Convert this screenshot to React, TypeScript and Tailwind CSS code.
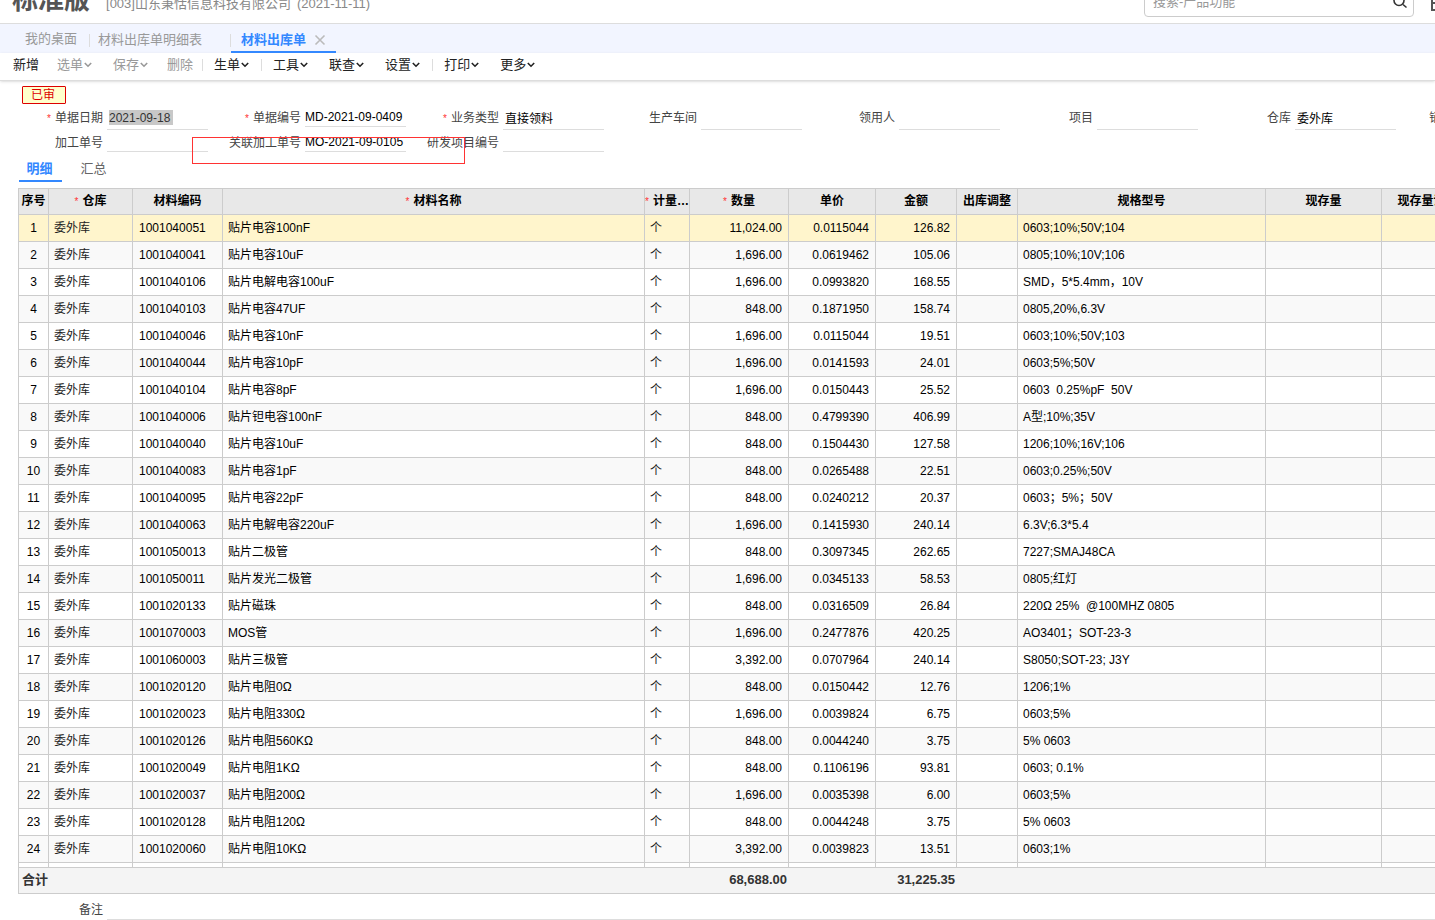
import { useState } from 'react';
import type { ReactNode } from 'react';

type Row = [string, string, string, string, string, string];

const rows: Row[] = [
  ['1001040051', '贴片电容100nF', '11,024.00', '0.0115044', '126.82', '0603;10%;50V;104'],
  ['1001040041', '贴片电容10uF', '1,696.00', '0.0619462', '105.06', '0805;10%;10V;106'],
  ['1001040106', '贴片电解电容100uF', '1,696.00', '0.0993820', '168.55', 'SMD，5*5.4mm，10V'],
  ['1001040103', '贴片电容47UF', '848.00', '0.1871950', '158.74', '0805,20%,6.3V'],
  ['1001040046', '贴片电容10nF', '1,696.00', '0.0115044', '19.51', '0603;10%;50V;103'],
  ['1001040044', '贴片电容10pF', '1,696.00', '0.0141593', '24.01', '0603;5%;50V'],
  ['1001040104', '贴片电容8pF', '1,696.00', '0.0150443', '25.52', '0603  0.25%pF  50V'],
  ['1001040006', '贴片钽电容100nF', '848.00', '0.4799390', '406.99', 'A型;10%;35V'],
  ['1001040040', '贴片电容10uF', '848.00', '0.1504430', '127.58', '1206;10%;16V;106'],
  ['1001040083', '贴片电容1pF', '848.00', '0.0265488', '22.51', '0603;0.25%;50V'],
  ['1001040095', '贴片电容22pF', '848.00', '0.0240212', '20.37', '0603；5%；50V'],
  ['1001040063', '贴片电解电容220uF', '1,696.00', '0.1415930', '240.14', '6.3V;6.3*5.4'],
  ['1001050013', '贴片二极管', '848.00', '0.3097345', '262.65', '7227;SMAJ48CA'],
  ['1001050011', '贴片发光二极管', '1,696.00', '0.0345133', '58.53', '0805;红灯'],
  ['1001020133', '贴片磁珠', '848.00', '0.0316509', '26.84', '220Ω 25%  @100MHZ 0805'],
  ['1001070003', 'MOS管', '1,696.00', '0.2477876', '420.25', 'AO3401；SOT-23-3'],
  ['1001060003', '贴片三极管', '3,392.00', '0.0707964', '240.14', 'S8050;SOT-23; J3Y'],
  ['1001020120', '贴片电阻0Ω', '848.00', '0.0150442', '12.76', '1206;1%'],
  ['1001020023', '贴片电阻330Ω', '1,696.00', '0.0039824', '6.75', '0603;5%'],
  ['1001020126', '贴片电阻560KΩ', '848.00', '0.0044240', '3.75', '5% 0603'],
  ['1001020049', '贴片电阻1KΩ', '848.00', '0.1106196', '93.81', '0603; 0.1%'],
  ['1001020037', '贴片电阻200Ω', '1,696.00', '0.0035398', '6.00', '0603;5%'],
  ['1001020128', '贴片电阻120Ω', '848.00', '0.0044248', '3.75', '5% 0603'],
  ['1001020060', '贴片电阻10KΩ', '3,392.00', '0.0039823', '13.51', '0603;1%'],
];

const columns = [
  { title: '序号', width: 'w-[30px]' },
  { title: '仓库', width: 'w-[84px]', required: true },
  { title: '材料编码', width: 'w-[90px]' },
  { title: '材料名称', width: '', required: true },
  { title: '计量单位', width: 'w-[45px]', required: true },
  { title: '数量', width: 'w-[99px]', required: true },
  { title: '单价', width: 'w-[87px]' },
  { title: '金额', width: 'w-[81px]' },
  { title: '出库调整', width: 'w-[61px]' },
  { title: '规格型号', width: 'w-[248px]' },
  { title: '现存量', width: 'w-[116px]' },
  { title: '现存量说明', width: 'w-[92px]' },
];

const Chevron = () => (
  <svg className="h-2 w-2.5" viewBox="0 0 10 8" fill="none" stroke="currentColor" strokeWidth="1.6">
    <path d="M1.800 2l3.200 3.200L8.200 2" />
  </svg>
);

const ToolButton = ({ children, disabled }: { children: ReactNode; disabled?: boolean }) => (
  <button type="button" disabled={disabled} className="px-2 text-[#222] disabled:text-[#999]">
    {children}
  </button>
);

const MenuButton = ({ children, disabled }: { children: ReactNode; disabled?: boolean }) => (
  <button
    type="button"
    disabled={disabled}
    className="flex items-center px-[10px] text-[#222] disabled:text-[#999]"
  >
    {children}
    <Chevron />
  </button>
);

const Divider = () => <span className="mx-px h-3 w-px bg-[#ddd]" />;

type FieldProps = {
  id: string;
  label: string;
  value?: string;
  required?: boolean;
  picker?: boolean;
  selected?: boolean;
};

const Field = ({ id, label, value = '', required, picker, selected }: FieldProps) => (
  <div className="flex w-[198px] shrink-0 items-start justify-end gap-1">
    <label htmlFor={id} className="whitespace-nowrap leading-6 text-[#444]">
      {required && <span className="mr-1 text-[10px] leading-none text-[#f33]">*</span>}
      {label}
    </label>
    {selected ? (
      <div className="h-6 w-[101px] border-b border-[#ddd] pl-0.5">
        <input
          id={id}
          defaultValue={value}
          className="mt-1 block h-[15px] w-16 bg-[#c8c8c8] text-[#333] outline-none"
        />
      </div>
    ) : (
      <input
        id={id}
        defaultValue={value}
        className={`w-[101px] border-b border-[#ddd] bg-transparent text-black outline-none ${
          picker ? 'h-6 pl-0.5' : 'h-[21px] pt-0.5'
        }`}
      />
    )}
  </div>
);

const App = () => {
  const [current, setCurrent] = useState(0);

  return (
    <div className="min-h-screen overflow-hidden bg-white font-['Liberation_Sans','Noto_Sans_CJK_SC',sans-serif] text-xs text-black">
      <header className="flex h-6 items-end border-b border-[#ddd] pl-3 text-[13px] text-[#888]">
        <h1 className="mb-[10px] text-[26px] font-bold leading-none text-[#555]">标准版</h1>
        <span className="mb-[9px] ml-4 leading-5">[003]山东秉恬信息科技有限公司</span>
        <span className="mb-[9px] ml-[6px] leading-5">(2021-11-11)</span>
        <form className="relative mb-[6px] ml-auto mr-[17px] w-[270px] shrink-0">
          <input
            type="text"
            aria-label="搜索"
            placeholder="搜索-产品功能"
            className="block h-8 w-full rounded-sm border border-[#ccc] pl-2 pr-8 outline-none placeholder:text-[#999]"
          />
          <svg
            className="absolute bottom-2 right-[6px] h-4 w-4 text-[#333]"
            viewBox="0 0 16 16"
            fill="none"
            stroke="currentColor"
            strokeWidth="1.6"
          >
            <circle cx="7" cy="7.500" r="5" />
            <path d="M11 11.500l3.500 3" />
          </svg>
        </form>
        <svg className="mb-3 -mr-3 h-4 w-4 shrink-0" viewBox="0 0 16 16" fill="none" stroke="#555" strokeWidth="2">
          <path d="M1 1h14v14H1zM1 8h14" />
        </svg>
      </header>

      <nav className="flex h-[29px] items-stretch bg-[#f2f5ff] text-[13px] text-[#999]">
        <a href="#desktop" className="flex items-center pl-[25px] pt-px">
          我的桌面
        </a>
        <span className="ml-3 mt-[10px] h-[13px] w-px bg-[#ddd]" />
        <a href="#detail" className="flex items-center pl-2 pt-[3px]">
          材料出库单明细表
        </a>
        <span className="ml-7 mt-[10px] h-[13px] w-px bg-[#ddd]" />
        <div className="flex items-center gap-2 border-b-2 border-[#38f] pl-[10px] pr-[10px] pt-1">
          <a href="#issue" className="font-bold text-[#38f]">
            材料出库单
          </a>
          <button type="button" aria-label="关闭" className="text-[#bbb]">
            <svg className="h-3 w-3" viewBox="0 0 12 12" fill="none" stroke="currentColor" strokeWidth="1.6">
              <path d="M1.500 1.500l9 9M10.500 1.500l-9 9" />
            </svg>
          </button>
        </div>
      </nav>

      <div className="flex h-7 items-center border-b border-[#ddd] pb-[3px] pl-[5px] text-[13px] shadow-sm">
        <ToolButton>新增</ToolButton>
        <MenuButton disabled>选单</MenuButton>
        <MenuButton disabled>保存</MenuButton>
        <ToolButton disabled>删除</ToolButton>
        <Divider />
        <MenuButton>生单</MenuButton>
        <Divider />
        <MenuButton>工具</MenuButton>
        <MenuButton>联查</MenuButton>
        <MenuButton>设置</MenuButton>
        <Divider />
        <MenuButton>打印</MenuButton>
        <MenuButton>更多</MenuButton>
      </div>

      <main className="relative pl-[18px] pt-[5px]">
        <div className="ml-1 h-[18px] w-11 rounded-[1px] border border-[#d00] bg-[#ffffcc] pl-2 leading-4 text-[#d00]">
          已审
        </div>

        <section className="-ml-2 mt-0.5">
          <div className="flex h-6">
            <Field id="date" label="单据日期" value="2021-09-18" required picker selected />
            <Field id="code" label="单据编号" value="MD-2021-09-0409" required />
            <Field id="biz" label="业务类型" value="直接领料" required picker />
            <Field id="workshop" label="生产车间" picker />
            <Field id="receiver" label="领用人" picker />
            <Field id="project" label="项目" picker />
            <Field id="store" label="仓库" value="委外库" picker />
            <Field id="order" label="销售订单号" picker />
          </div>
          <div className="mt-px flex h-6">
            <Field id="job" label="加工单号" />
            <Field id="linked" label="关联加工单号" value="MO-2021-09-0105" />
            <Field id="rd" label="研发项目编号" />
          </div>
        </section>
        <div className="pointer-events-none absolute left-48 top-14 h-[27px] w-[273px] border border-[#f33]" />

        <div className="ml-px flex text-[13px]">
          <button
            type="button"
            className="h-[27px] w-[43px] border-b-2 border-[#38f] pr-0.5 pt-0.5 font-bold text-[#38f]"
          >
            明细
          </button>
          <button type="button" className="ml-[10px] h-[27px] w-[43px] text-[#666]">
            汇总
          </button>
        </div>

        <table className="mt-[6px] w-full min-w-[1456px] table-fixed border-separate border-spacing-0 border-l border-t border-[#ccc]">
          <colgroup>
            {columns.map((col) => (
              <col key={col.title} className={col.width} />
            ))}
          </colgroup>
          <thead>
            <tr className="bg-[#e8e8e8]">
              {columns.map((col) => (
                <th
                  key={col.title}
                  className="h-[26px] truncate border-b border-r border-[#ccc] p-0 pb-0.5 leading-4"
                >
                  {col.required && (
                    <span className="mr-1 text-[10px] font-normal leading-none text-[#f33]">*</span>
                  )}
                  {col.title}
                </th>
              ))}
            </tr>
          </thead>
          <tbody className="[&_td]:whitespace-pre [&_td]:border-b [&_td]:border-r [&_td]:border-[#ccc] [&_td]:py-0 [&_td]:leading-4">
            {rows.map(([code, name, qty, price, amount, spec], i) => (
              <tr
                key={code}
                onClick={() => setCurrent(i)}
                className={i === current ? 'bg-[#fff5cc]' : i % 2 ? 'bg-[#f9f9f9]' : 'bg-white'}
              >
                <td className="h-[27px] text-center">{i + 1}</td>
                <td className="px-[5px] text-[#222]">委外库</td>
                <td className="px-[6px]">{code}</td>
                <td className="px-[5px]">{name}</td>
                <td className="px-[5px] text-[#222]">个</td>
                <td className="px-[6px] text-right">{qty}</td>
                <td className="px-[6px] text-right">{price}</td>
                <td className="px-[6px] text-right">{amount}</td>
                <td />
                <td className="px-[5px]">{spec}</td>
                <td />
                <td />
              </tr>
            ))}
            <tr>
              {columns.map((col) => (
                <td key={col.title} className="h-[5px]" />
              ))}
            </tr>
          </tbody>
          <tfoot>
            <tr className="bg-[#f4f4f4] text-[13px] font-bold text-[#333] [&>*]:border-b [&>*]:border-[#ccc] [&>*]:pb-0.5 [&>*]:pt-0">
              <th scope="row" colSpan={5} className="h-[26px] pl-[3px] text-left">
                合计
              </th>
              <td className="px-0.5 text-right">68,688.00</td>
              <td />
              <td className="px-0.5 text-right">31,225.35</td>
              <td colSpan={4} />
            </tr>
          </tfoot>
        </table>

        <div className="-ml-2 flex items-end gap-1 pt-0.5">
          <label htmlFor="memo" className="w-[93px] text-right leading-5 text-[#444]">
            备注
          </label>
          <input id="memo" className="h-6 flex-1 border-b border-[#ddd] outline-none" />
        </div>
      </main>
    </div>
  );
};

export default App;
